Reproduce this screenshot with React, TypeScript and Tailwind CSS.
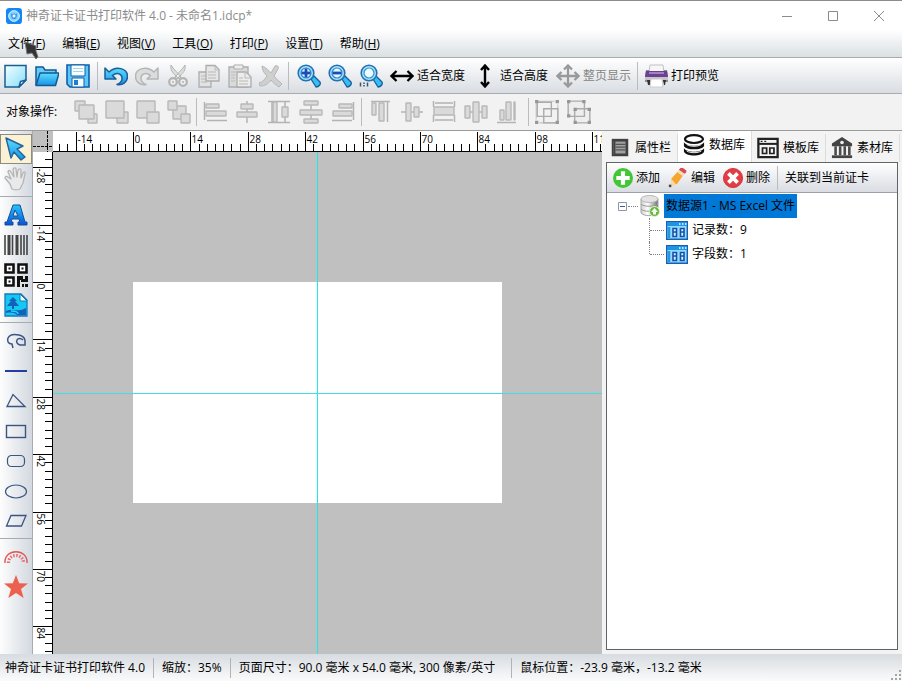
import React, { useEffect, useRef, useState } from 'react';

const FONT = "font-['Open_Sans','Noto_Sans_CJK_SC',sans-serif]";

type IconProps = { children: React.ReactNode; className?: string; box?: string };

function Icon({ children, className = 'size-6', box = '0 0 24 24' }: IconProps) {
  return (
    <svg viewBox={box} className={`shrink-0 ${className}`} fill="none" aria-hidden="true">
      {children}
    </svg>
  );
}

function Gradients() {
  return (
    <svg className="absolute size-0" aria-hidden="true">
      <defs>
        <linearGradient id="sky" x1="0" y1="0" x2="1" y2="1">
          <stop offset="0" stopColor="#f2ffff" />
          <stop offset="1" stopColor="#86dcfb" />
        </linearGradient>
        <linearGradient id="blue" x1="0" y1="0" x2="0" y2="1">
          <stop offset="0" stopColor="#5fdcfc" />
          <stop offset="1" stopColor="#1593e8" />
        </linearGradient>
        <linearGradient id="letter" x1="0" y1="0" x2="0" y2="1">
          <stop offset="0" stopColor="#22c9fb" />
          <stop offset="1" stopColor="#0b50d8" />
        </linearGradient>
        <linearGradient id="steel" x1="0" y1="0" x2="1" y2="0">
          <stop offset="0" stopColor="#d0d0d0" />
          <stop offset="0.4" stopColor="#ffffff" />
          <stop offset="1" stopColor="#6d6d6d" />
        </linearGradient>
      </defs>
    </svg>
  );
}

/* ---------- main toolbar icons ---------- */

const NewIcon = () => (
  <Icon>
    <path d="M1 1.500h21v14.500l-7 7H1z" fill="url(#sky)" stroke="#175f93" strokeWidth="1.500" />
    <path d="M22 16l-7 7 1.500-5.500z" fill="#e9fbff" stroke="#175f93" strokeWidth="1.500" strokeLinejoin="round" />
  </Icon>
);
const OpenIcon = () => (
  <Icon>
    <path d="M1 21V3h7l2 3h11v4" fill="#67cdf8" stroke="#145a92" strokeWidth="1.500" />
    <path d="M1 21.500L5 9h19l-3.500 12.500z" fill="url(#blue)" stroke="#145a92" strokeWidth="1.500" strokeLinejoin="round" />
  </Icon>
);
const SaveIcon = () => (
  <Icon>
    <path d="M1 1h22v22H4l-3-3z" fill="#5cc8fa" stroke="#0f5fa8" strokeWidth="1.600" />
    <path d="M5 1h14v11H5z" fill="#f7feff" stroke="#0f5fa8" />
    <path d="M7 4.500h10M7 7.500h10" stroke="#a8d3e6" />
    <path d="M6 14h12v9H6z" fill="#f2fcff" stroke="#0f5fa8" />
    <path d="M8 16h4v5H8z" fill="#1e7fd0" />
  </Icon>
);
const undoPath = 'M1 4v11h11L8.500 11.500C13 7.500 18.500 10 18 15c-.3 3-2.500 4.500-5 5.500 6 1 10.500-2.500 10.500-8C23.500 4 12 1.500 5 8z';
const UndoIcon = () => (
  <Icon><path d={undoPath} fill="url(#blue)" stroke="#1a5d98" strokeWidth="1.500" strokeLinejoin="round" /></Icon>
);
const RedoIcon = () => (
  <Icon><path d={undoPath} transform="matrix(-1 0 0 1 24 0)" fill="#dcdcdc" stroke="#b5b5b5" strokeWidth="1.500" strokeLinejoin="round" /></Icon>
);
const CutIcon = () => (
  <Icon>
    <path d="M5 1c-1 5 2 8 5 11l3 3 2-2L7 4zM19 1c1 5-2 8-5 11l-3 3-2-2 8-9z" fill="#dedede" stroke="#b3b3b3" />
    <circle cx="7" cy="18" r="3.800" stroke="#b3b3b3" strokeWidth="2.200" fill="#eee" />
    <circle cx="17" cy="18" r="3.800" stroke="#b3b3b3" strokeWidth="2.200" fill="#eee" />
    <path d="M6 18h2M16 18h2" stroke="#b3b3b3" strokeWidth="1.500" />
  </Icon>
);
const CopyIcon = () => (
  <Icon>
    <path d="M2 8h12v15H2z" fill="#e2e2e2" stroke="#adadad" strokeWidth="1.300" />
    <path d="M4 12h6M4 15h6M4 18h6" stroke="#b8b8b8" />
    <path d="M9 1.500h9l4 4V17H9z" fill="#e6e6e6" stroke="#adadad" strokeWidth="1.300" />
    <path d="M18 2v4h4M11 8h8M11 11h8M11 14h8" stroke="#b8b8b8" />
  </Icon>
);
const PasteIcon = () => (
  <Icon>
    <path d="M1 3h19v20H1z" fill="#dadada" stroke="#adadad" strokeWidth="1.300" />
    <path d="M6 1h9v4H6z" fill="#eee" stroke="#adadad" />
    <path d="M3 8h5M3 11h4M3 14h4M3 17h4" stroke="#bbb" />
    <path d="M9 8h9l5 5v10H9z" fill="#ececec" stroke="#adadad" strokeWidth="1.300" />
    <path d="M17 8v6h6M11 14h4M11 17h9M11 20h9" stroke="#b8b8b8" />
  </Icon>
);
const DeleteIcon = () => (
  <Icon>
    <path d="M3 2c5 2 7 5 9 7l4-7c3-1 4 1 3 3l-4 7c2 3 5 5 8 8l-3 3c-3-2-6-4-8-7-3 4-6 6-11 6l-1-3c4-1 6-4 8-7C5 9 3 6 3 2z" fill="#cfcfcf" stroke="#b6b6b6" strokeLinejoin="round" />
  </Icon>
);
function ZoomIcon({ kind }: { kind: 'in' | 'out' | 'fit' }) {
  const x = kind === 'fit' ? 10 : 9;
  return (
    <Icon>
      <path d="M14 15l3-3 6 6c1 2-1 5-4 5z" fill="#36bdf5" stroke="#175e9b" strokeWidth="1.300" strokeLinejoin="round" />
      <circle cx={x} cy="9" r="7.800" fill="#a5e3fa" stroke="#2171b5" strokeWidth="1.600" />
      <circle cx={x} cy="9" r="5" fill={kind === 'fit' ? '#effcff' : '#e3f7ff'} stroke={kind === 'fit' ? '#2f93cd' : '#3486cd'} strokeWidth="1.200" />
      {kind !== 'fit' && <path d="M4.500 9h9" stroke="#174fb3" strokeWidth="2.800" />}
      {kind === 'in' && <path d="M9 4.500v9" stroke="#174fb3" strokeWidth="2.800" />}
      {kind === 'fit' && <path d="M1.500 18.500v4M5 18.500v1.500M5 21v1.500M8.500 18.500v4" stroke="#39566e" strokeWidth="1.500" />}
    </Icon>
  );
}
const WidthIcon = () => (
  <Icon><path d="M2 12h20M6.500 7L1.500 12l5 5M17.500 7l5 5-5 5" stroke="#000" strokeWidth="2.300" /></Icon>
);
const HeightIcon = () => (
  <Icon><path d="M12 2v20M8 6l4-4.500L16 6M8 18l4 4.500 4-4.500" stroke="#000" strokeWidth="2.400" /></Icon>
);
const PageIcon = () => (
  <Icon><path d="M12 2v20M2 12h20M8 5.500l4-4 4 4M8 18.500l4 4 4-4M5.500 8l-4 4 4 4M18.500 8l4 4-4 4" stroke="#999" strokeWidth="2.300" /></Icon>
);
const PrinterIcon = () => (
  <Icon>
    <path d="M6 1h13l1 8H5z" fill="#f6f6f6" stroke="#c2c2c2" />
    <path d="M2 6h3l1 4h13l1-4h3l1 6v6H1v-6z" fill="#8d8d91" />
    <path d="M2 7h21l1 6H1z" fill="#6b3f92" />
    <path d="M5 8h15v2H5z" fill="#a283bf" />
    <path d="M1 13h23v3H1z" fill="#c4c4c8" />
    <path d="M3 16h3v5H4zM19 16h3l-1 5h-1z" fill="#333" />
    <path d="M7 15h11l1 8H6z" fill="#fff" stroke="#ccc" />
  </Icon>
);

/* ---------- object toolbar icons ---------- */

type Rect = [number, number, number, number];

function Blocks({ rects, lines = '' }: { rects: Rect[]; lines?: string }) {
  return (
    <Icon>
      {lines && <path d={lines} stroke="#b3b3b3" strokeWidth="1.500" />}
      {rects.map(([x, y, w, h], i) => (
        <rect key={i} x={x} y={y} width={w} height={h} rx="0.500" fill="#dadada" stroke="#b8b8b8" strokeWidth="1.400" />
      ))}
    </Icon>
  );
}

type Tool = { name: string; rects: Rect[]; lines?: string };

const orderTools: Tool[] = [
  { name: '置于顶层', rects: [[1, 1, 10, 10], [14, 14, 9, 9], [5, 5, 15, 14]] },
  { name: '上移一层', rects: [[12, 12, 11, 11], [1, 1, 18, 17]] },
  { name: '下移一层', rects: [[1, 1, 18, 17], [11, 12, 12, 11]] },
  { name: '置于底层', rects: [[6, 6, 13, 13], [1, 1, 9, 9], [14, 14, 9, 9]] },
];
const alignTools: Tool[] = [
  { name: '左对齐', lines: 'M1.500 2v18M4 20.500h20', rects: [[3, 4, 13, 4], [3, 11, 20, 5]] },
  { name: '水平居中', lines: 'M12 1v22', rects: [[6, 4, 12, 5], [2, 12, 20, 5]] },
  { name: '垂直等距', lines: 'M1 1.500h22M1 22.500h22M5 2v20M18 2v20', rects: [[6, 2, 4, 20], [15, 7, 6, 10]] },
  { name: '垂直分布', lines: 'M12 1v22', rects: [[5, 1, 14, 4], [1, 10, 22, 5], [5, 19, 14, 4]] },
  { name: '右对齐', lines: 'M22.500 2v18M1 20.500h20', rects: [[8, 4, 13, 4], [2, 11, 19, 5]] },
];
const distributeTools: Tool[] = [
  { name: '顶对齐', lines: 'M3 1.500h19M19.500 2v20', rects: [[4, 3, 4, 12], [11, 3, 5, 18]] },
  { name: '垂直居中', lines: 'M1 12h22', rects: [[6, 3, 5, 18], [14, 7, 5, 10]] },
  { name: '水平等距', lines: 'M1.500 1v6M22.500 1v6M1.500 15v7M22.500 15v7M3 3h18M3 20h18', rects: [[2, 7, 20, 8]] },
  { name: '水平分布', lines: 'M1 12h22', rects: [[1, 6, 5, 12], [9, 2, 6, 20], [18, 6, 5, 12]] },
  { name: '底对齐', lines: 'M1 22.500h19', rects: [[4, 10, 4, 10], [10, 2, 5, 18], [18, 2, 1, 18]] },
];

const GroupIcon = () => (
  <Icon className="size-[26px]">
    <path d="M4 2h15M2 4v15M22 5v15M5 22h15" stroke="#c4c4c4" />
    <path d="M3 3h13v13H3zM9 9h13v13H9z" stroke="#ababab" strokeWidth="1.300" />
    <path d="M1 1h3v3H1zM20 1h3v3h-3zM1 20h3v3H1zM20 20h3v3h-3z" fill="#969696" />
  </Icon>
);
const UngroupIcon = () => (
  <Icon className="size-[26px]">
    <path d="M2 2h15v14H2zM8 9h14v13H8z" stroke="#ababab" strokeWidth="1.300" fill="#eee" />
    <path d="M1 1h3v3H1zM15 1h3v3h-3zM1 14h3v3H1zM7 8h3v3H7zM20 8h3v3h-3zM7 20h3v3H7zM20 20h3v3h-3z" fill="#969696" />
  </Icon>
);

/* ---------- side tool icons ---------- */

const PointerIcon = () => (
  <Icon><path d="M2 1l17 8-6 3 8 8-4 3-7-8-3 6z" fill="url(#blue)" stroke="#25639a" strokeWidth="1.400" strokeLinejoin="round" /></Icon>
);
const HandIcon = () => (
  <Icon>
    <path d="M8 22l-2-5-5-6c0-2 2-2 3-1l3 2-3-7c0-2 2-2 3 0l3 5-1-8c1-2 3-1 3 0l1 8 1-7c1-2 3-1 3 0v8l2-5c1-2 3-1 2 1l-2 9-3 6c-2 1-6 1-8 0z" fill="#e9e9e9" stroke="#b5b5b5" strokeWidth="1.300" strokeLinejoin="round" />
  </Icon>
);
const LetterIcon = () => (
  <Icon>
    <path d="M9 2h7l5 17h2v3h-9v-3h2l-1-3H8l-1 3h2v3H1v-3h2zM11 7l-2 6h5z" fill="url(#letter)" fillRule="evenodd" stroke="#174e95" />
  </Icon>
);
const BarcodeIcon = () => (
  <Icon>
    <path d="M1 2v20M8.500 2v20M17 2v20M20 2v20M23 2v20" stroke="#444" strokeWidth="1.600" />
    <path d="M5 2v20M13 2v20" stroke="#444" strokeWidth="3" />
  </Icon>
);
const QrIcon = () => (
  <Icon>
    <path d="M1.500 1.500h8v8h-8zM14.500 1.500h8v8h-8zM1.500 14.500h8v8h-8z" fill="#fff" stroke="#111" strokeWidth="2.600" />
    <path d="M4.500 4.500h2v2h-2zM17.500 4.500h2v2h-2zM4.500 17.500h2v2h-2zM13 13h6v3h2v-3h3v6h-7v-2h-1v7h-3zM18 21h2v3h-2zM21 21h3v3h-3z" fill="#111" />
  </Icon>
);
const PictureIcon = () => (
  <Icon>
    <path d="M1 1h16l6 6v16H1z" fill="#13c9f2" stroke="#1478b9" strokeWidth="1.300" />
    <path d="M16 1v7h7z" fill="#e6fbff" stroke="#1478b9" />
    <path d="M9 4l4 4h-2l4 5h-5v3H8v-3H3l4-5H5zM2 18c6-3 10 2 20-3v7h-9c-1-2-6-3-11-2z" fill="#1560b9" />
    <path d="M7 18c4 0 7 1 7 3" stroke="#20d1ff" strokeWidth="1.500" />
  </Icon>
);
const draw = '#3d5482';
const LassoIcon = () => (
  <Icon><path d="M9 19l-1-4c-4 0-5-3-4-6 2-4 7-4 11-3 4 1 6 3 6 6v4h-5c-3-1-4-3-3-5 1-2 4-2 6 0" stroke={draw} strokeWidth="1.500" /></Icon>
);
const LineIcon = () => <Icon><path d="M1 12h22" stroke="#253fa0" strokeWidth="2" /></Icon>;
const TriangleIcon = () => <Icon><path d="M9 5.500L3 17.500h18z" stroke={draw} strokeWidth="1.300" /></Icon>;
const RectangleIcon = () => <Icon><rect x="2.500" y="6.500" width="19" height="12" stroke={draw} strokeWidth="1.400" /></Icon>;
const RoundedIcon = () => <Icon><rect x="3.500" y="6.500" width="17" height="11" rx="4" stroke={draw} strokeWidth="1.200" /></Icon>;
const EllipseIcon = () => <Icon><ellipse cx="12" cy="12.500" rx="10.500" ry="6.500" stroke={draw} strokeWidth="1.200" /></Icon>;
const SkewIcon = () => <Icon><path d="M7 6.500h15l-4.500 10.500H2.500z" stroke={draw} strokeWidth="1.300" /></Icon>;
const ArcTextIcon = () => (
  <Icon>
    <path d="M1 18c-1-15 23-15 22 0" stroke="#e25757" strokeWidth="1.400" />
    <path d="M4.500 18c0-10 15-10 15 0" stroke="#e66c6c" strokeWidth="3.200" strokeDasharray="1.500 1.500" />
  </Icon>
);
const StarIcon = () => (
  <Icon><path d="M12 0l3.200 8.300 8.800.2-7 5.400 2.700 9.100L12 18l-7.700 5L7 13.900 0 8.500l8.800-.2z" fill="#ed6050" /></Icon>
);

/* ---------- panel icons ---------- */

const PropsIcon = () => (
  <Icon className="size-[22px]">
    <path d="M3 2h18v19H3z" fill="#414141" />
    <path d="M7 5h11v13H7z" fill="#a1a1a1" />
    <path d="M7 8h11M7 11h11M7 14h11M5 4v15" stroke="#565656" strokeWidth="1.300" />
  </Icon>
);
const DatabaseIcon = () => (
  <Icon className="size-[22px]">
    <path d="M1 9c3 5 19 5 22 0v4c-2 5-20 5-22 0z" fill="#111" />
    <path d="M1 15.500c3 5 19 5 22 0V19c-2 6-20 6-22 0z" fill="#111" />
    <ellipse cx="12" cy="5.500" rx="9.800" ry="4.300" fill="#fff" stroke="#111" strokeWidth="2.400" />
    <path d="M4 11.500c4 2.500 12 2.500 16 0M4 18.500c4 2.500 12 2.500 16 0" stroke="#fff" strokeWidth="1" />
  </Icon>
);
const TemplateIcon = () => (
  <Icon className="size-[22px]">
    <path d="M1.500 2h21v20h-21z" stroke="#222" strokeWidth="2.500" />
    <path d="M2 7.500h20" stroke="#222" strokeWidth="2.200" />
    <path d="M4 4h2v1.500H4zM8 4h2v1.500H8z" fill="#222" />
    <path d="M6 12h4.500v6H6zM14 12h4.500v6H14z" stroke="#222" strokeWidth="1.900" />
  </Icon>
);
const MuseumIcon = () => (
  <Icon className="size-[22px]">
    <path d="M12 0L1 7v3h22V7z" fill="#444" />
    <path d="M5 10v10M10 10v10M15 10v10M20 10v10" stroke="#4c4c4c" strokeWidth="2.800" />
    <path d="M1 20h22v3H1z" fill="#444" />
    <circle cx="12" cy="6" r="2" fill="#eee" />
  </Icon>
);
const AddIcon = () => (
  <Icon className="size-5">
    <circle cx="12" cy="12" r="12" fill="#43c636" />
    <path d="M12 4v16M4 12h16" stroke="#fff" strokeWidth="5" />
  </Icon>
);
const EditIcon = () => (
  <Icon className="size-5">
    <path d="M4 13L12 4l6 5-7 10-5 2z" fill="#f5a62b" />
    <path d="M11 5l2-3 7 5-2 3z" fill="#f3dcc0" />
    <path d="M13 2l2-2h3l4 3v2l-2 2z" fill="#dc4b4b" />
    <path d="M4 13l6 7-7 2z" fill="#f9d7a2" />
    <path d="M1 20h3v3H1z" fill="#3d4a5c" />
  </Icon>
);
const RemoveIcon = () => (
  <Icon className="size-5">
    <circle cx="12" cy="12" r="11.500" fill="#e43c42" stroke="#c62a31" />
    <path d="M6.500 6.500l11 11M17.500 6.500l-11 11" stroke="#fff" strokeWidth="4.500" />
  </Icon>
);
const SourceIcon = () => (
  <Icon className="h-[22px] w-5" box="0 0 20 22">
    <path d="M1 4v14c2 3 13 4 17 0V4" fill="url(#steel)" stroke="#a5a5a5" />
    <ellipse cx="9.500" cy="4" rx="8.500" ry="3.500" fill="#e3e3e3" stroke="#b5b5b5" />
    <path d="M1 9c2 3 14 3 17 0M1 14c2 3 14 3 17 0" stroke="#999" />
    <circle cx="14.500" cy="16.500" r="5" fill="#64b83c" stroke="#dff2d6" />
    <path d="M14.500 13l3.500 4h-2v2.500h-3V17h-2z" fill="#f5fff0" />
  </Icon>
);
const FieldIcon = () => (
  <Icon className="h-[19px] w-[22px]" box="0 0 22 19">
    <path d="M.7.700h20.600v17.600H.7z" fill="#8fdcff" stroke="#1560b4" strokeWidth="1.400" />
    <path d="M1 1h20v4H1z" fill="#1f93e4" />
    <path d="M13 3h1.500M16 3h1.500M19 3h1.500" stroke="#fff" strokeWidth="1.500" />
    <path d="M7 7.500h3.500v3.500H7zM7 11h3.500v4.500H7zM14.500 7.500H18v3.500h-3.500zM14.500 11H18v4.500h-3.500z" fill="#d8f5ff" stroke="#1a50a8" strokeWidth="1.600" />
    <path d="M3 6v11" stroke="#2895df" strokeWidth="2.500" />
  </Icon>
);

/* ---------- shared controls ---------- */

function ToolButton({ label, wide, disabled, children }: { label: string; wide?: boolean; disabled?: boolean; children: React.ReactNode }) {
  return (
    <button type="button" aria-label={label} disabled={disabled} className={`flex h-8 items-center justify-center ${wide ? 'w-8' : 'w-[31px]'}`}>
      {children}
    </button>
  );
}

function TextButton({ label, disabled, children }: { label: string; disabled?: boolean; children: React.ReactNode }) {
  return (
    <button type="button" disabled={disabled} className="flex h-8 items-center gap-[3px] px-1 whitespace-nowrap disabled:text-[#858585]">
      {children}
      {label}
    </button>
  );
}

const Separator = () => <span className="mx-0.5 h-7 w-px shrink-0 bg-[#b9bcc0]" />;

const menus = [['文件', 'F'], ['编辑', 'E'], ['视图', 'V'], ['工具', 'O'], ['打印', 'P'], ['设置', 'T'], ['帮助', 'H']];

/* ---------- rulers ---------- */

const TICK = 57.375 / 7;

function useTicks(origin: number, side: 'width' | 'height') {
  const ref = useRef<SVGSVGElement>(null);
  const [length, setLength] = useState(500);
  useEffect(() => {
    const el = ref.current;
    if (!el) return;
    const observer = new ResizeObserver(() => setLength(el.getBoundingClientRect()[side]));
    observer.observe(el);
    return () => observer.disconnect();
  }, [side]);
  const first = -Math.floor((origin - 4) / TICK);
  const last = Math.floor((length - origin) / TICK);
  const ticks = Array.from({ length: Math.max(0, last - first + 1) }, (_, k) => ({
    value: (first + k) * 2,
    major: (first + k) % 7 === 0,
    at: Math.round(origin + (first + k) * TICK) + 0.5,
  }));
  return { ref, ticks };
}

function TopRuler() {
  const { ref, ticks } = useTicks(80, 'width');
  return (
    <svg ref={ref} className="h-[21px] min-w-0 flex-1 bg-white" shapeRendering="crispEdges" aria-label="水平标尺">
      {ticks.map((t) => (
        <g key={t.value}>
          <path d={`M${t.at} ${t.major ? 1 : 13}V21`} stroke="#000" />
          {t.major && <text x={t.at + 1} y="12" className="text-[10px]">{t.value}</text>}
        </g>
      ))}
      <rect y="20" width="100%" height="1" fill="#000" />
    </svg>
  );
}

function LeftRuler() {
  const { ref, ticks } = useTicks(130, 'height');
  return (
    <svg ref={ref} className="w-5 shrink-0 bg-white" shapeRendering="crispEdges" aria-label="垂直标尺">
      {ticks.map((t) => (
        <g key={t.value}>
          <path d={`M${t.major ? 0 : 12} ${t.at}H20`} stroke="#000" />
          {t.major && <text transform={`translate(4 ${t.at + 1}) rotate(90)`} className="text-[10px]">{t.value}</text>}
        </g>
      ))}
      <rect x="19" width="1" height="100%" fill="#000" />
    </svg>
  );
}

const sideGroups: { name: string; icon: React.ReactNode }[][] = [
  [{ name: '选择', icon: <PointerIcon /> }, { name: '平移', icon: <HandIcon /> }],
  [{ name: '文字', icon: <LetterIcon /> }, { name: '条形码', icon: <BarcodeIcon /> }, { name: '二维码', icon: <QrIcon /> }, { name: '图片', icon: <PictureIcon /> }],
  [
    { name: '曲线', icon: <LassoIcon /> },
    { name: '直线', icon: <LineIcon /> },
    { name: '三角形', icon: <TriangleIcon /> },
    { name: '矩形', icon: <RectangleIcon /> },
    { name: '圆角矩形', icon: <RoundedIcon /> },
    { name: '椭圆', icon: <EllipseIcon /> },
    { name: '平行四边形', icon: <SkewIcon /> },
  ],
  [{ name: '弧形文字', icon: <ArcTextIcon /> }, { name: '星形', icon: <StarIcon /> }],
];

const tabs = [
  { label: '属性栏', icon: <PropsIcon /> },
  { label: '数据库', icon: <DatabaseIcon /> },
  { label: '模板库', icon: <TemplateIcon /> },
  { label: '素材库', icon: <MuseumIcon /> },
];

function SidePanel() {
  return (
    <aside className="flex w-[300px] shrink-0 flex-col bg-[#f3f3f3] pb-1">
      <div role="tablist" className="flex h-[31px] items-end pl-0.5">
        {tabs.map((tab, i) => (
          <button
            key={tab.label}
            type="button"
            role="tab"
            aria-selected={i === 1}
            className="flex h-7 w-[74px] shrink-0 items-center gap-1 border-r border-[#dcdcdc] pl-[5px] whitespace-nowrap aria-selected:h-[31px] aria-selected:bg-white aria-selected:pb-1"
          >
            {tab.icon}
            {tab.label}
          </button>
        ))}
      </div>
      <div className="mx-1 flex flex-1 flex-col border border-[#5f6468] bg-white">
        <div className="flex h-[30px] items-center border-b border-[#9da2a8] bg-linear-to-b from-white to-[#d9dce2] pl-0.5">
          {[
            { label: '添加', icon: <AddIcon /> },
            { label: '编辑', icon: <EditIcon /> },
            { label: '删除', icon: <RemoveIcon /> },
          ].map((b) => (
            <button key={b.label} type="button" className="flex items-center gap-[3px] px-1 whitespace-nowrap">
              {b.icon}
              {b.label}
            </button>
          ))}
          <span className="mr-1 ml-[3px] h-6 w-px bg-[#b9bcc0]" />
          <button type="button" className="px-[3px] whitespace-nowrap">关联到当前证卡</button>
        </div>
        <ul role="tree" className="pt-px pl-[11px]">
          <li role="treeitem" aria-expanded="true" aria-selected="true">
            <div className="flex h-6 items-center">
              <Icon className="size-[9px]" box="0 0 9 9">
                <path d="M.5.500h8v8h-8z" fill="#fff" stroke="#8a97a8" />
                <path d="M2 4.500h5" stroke="#3f5a8c" />
              </Icon>
              <span className="mr-0.5 ml-px w-2.5 border-t border-dotted border-[#808080]" />
              <SourceIcon />
              <span className="ml-1 flex h-6 items-center bg-[#0078d7] px-0.5 whitespace-nowrap">数据源1 - MS Excel 文件</span>
            </div>
            <ul role="group" className="ml-[31px]">
              {['记录数：9', '字段数：1'].map((label, i) => (
                <li key={label} role="treeitem" className="flex h-6 items-center">
                  <span className={`w-px border-l border-dotted border-[#808080] ${i === 0 ? 'h-6' : 'h-3 self-start'}`} />
                  <span className="mr-0.5 w-3.5 border-t border-dotted border-[#808080]" />
                  <FieldIcon />
                  <span className="ml-1 whitespace-nowrap">{label}</span>
                </li>
              ))}
            </ul>
          </li>
        </ul>
      </div>
    </aside>
  );
}

export default function App() {
  return (
    <div className={`relative flex h-screen flex-col overflow-hidden border-t border-[#8c8c8c] bg-[#f2f2f2] text-xs text-black ${FONT}`}>
      <Gradients />

      <header className="flex h-[29px] shrink-0 items-center bg-white pl-1.5">
        <Icon className="size-4">
          <rect width="24" height="24" rx="5" fill="#1487f4" />
          <circle cx="12" cy="12" r="8" fill="#83cffb" stroke="#e2f5ff" strokeWidth="1.500" />
          <path d="M7 8l5 3 5-3-2 8H9z" fill="#2a9df5" />
          <circle cx="12" cy="12" r="3" fill="#e9f8ff" stroke="#1778dc" />
        </Icon>
        <h1 className="ml-1 flex-1 whitespace-nowrap text-[#8b8b8b]">神奇证卡证书打印软件 4.0 - 未命名1.idcp*</h1>
        <div className="flex">
          {[
            { name: '最小化', d: 'M0 5.500h10' },
            { name: '最大化', d: 'M.5.500h9v9h-9z' },
            { name: '关闭', d: 'M0 0l10 10M10 0L0 10' },
          ].map((b) => (
            <button key={b.name} type="button" aria-label={b.name} className="flex h-7 w-[46px] items-center justify-center">
              <Icon className="size-2.5 overflow-visible" box="0 0 10 10"><path d={b.d} stroke="#8b8b8b" /></Icon>
            </button>
          ))}
        </div>
      </header>

      <nav className="flex h-7 shrink-0 items-center gap-px border-b border-[#a9adb0] bg-linear-to-b from-white to-[#dae0e3] pt-px">
        {menus.map(([name, key]) => (
          <button key={key} type="button" className="px-2 whitespace-nowrap">
            {name}(<span className="underline">{key}</span>)
          </button>
        ))}
      </nav>

      <div role="toolbar" aria-label="常用工具" className="flex h-9 shrink-0 items-center border-b border-[#a9adb0] bg-linear-to-b from-white to-[#d9dde2]">
        <ToolButton label="新建"><NewIcon /></ToolButton>
        <ToolButton label="打开"><OpenIcon /></ToolButton>
        <ToolButton label="保存"><SaveIcon /></ToolButton>
        <span className="w-0.5" />
        <Separator />
        <ToolButton label="撤销"><UndoIcon /></ToolButton>
        <ToolButton label="重做" disabled><RedoIcon /></ToolButton>
        <ToolButton label="剪切" disabled><CutIcon /></ToolButton>
        <ToolButton label="复制" disabled><CopyIcon /></ToolButton>
        <ToolButton label="粘贴" disabled><PasteIcon /></ToolButton>
        <ToolButton label="删除" disabled><DeleteIcon /></ToolButton>
        <Separator />
        <span className="w-0.5" />
        <ToolButton label="放大"><ZoomIcon kind="in" /></ToolButton>
        <ToolButton label="缩小"><ZoomIcon kind="out" /></ToolButton>
        <ToolButton label="实际大小"><ZoomIcon kind="fit" /></ToolButton>
        <TextButton label="适合宽度"><WidthIcon /></TextButton>
        <TextButton label="适合高度"><HeightIcon /></TextButton>
        <TextButton label="整页显示" disabled><PageIcon /></TextButton>
        <Separator />
        <TextButton label="打印预览"><PrinterIcon /></TextButton>
      </div>

      <div role="toolbar" aria-label="对象操作" className="flex h-[37px] shrink-0 items-center border-b border-[#9b9b9b]">
        <span className="w-[70px] pl-1.5 whitespace-nowrap">对象操作:</span>
        {orderTools.map((t) => (
          <ToolButton key={t.name} label={t.name} disabled><Blocks rects={t.rects} lines={t.lines} /></ToolButton>
        ))}
        <Separator />
        {alignTools.map((t) => (
          <ToolButton key={t.name} label={t.name} wide disabled><Blocks rects={t.rects} lines={t.lines} /></ToolButton>
        ))}
        <Separator />
        {distributeTools.map((t) => (
          <ToolButton key={t.name} label={t.name} wide disabled><Blocks rects={t.rects} lines={t.lines} /></ToolButton>
        ))}
        <span className="w-0.5" />
        <Separator />
        <ToolButton label="组合" wide disabled><GroupIcon /></ToolButton>
        <ToolButton label="取消组合" wide disabled><UngroupIcon /></ToolButton>
      </div>

      <main className="flex min-h-0 flex-1">
        <div role="toolbar" aria-label="绘图工具" className="flex w-[33px] shrink-0 flex-col border-r border-[#a7abb0] bg-linear-to-r from-[#fdfdfd] to-[#d3d9e0]">
          {sideGroups.map((group, g) => (
            <div key={g} className="flex flex-col border-b border-[#a7abb0] pt-[3px] pb-0.5 last:flex-1 last:border-b-0">
              {group.map((t) => (
                <button
                  key={t.name}
                  type="button"
                  aria-label={t.name}
                  aria-pressed={t.name === '选择'}
                  className="flex h-[30px] items-center justify-center border border-transparent aria-pressed:border-[#8e8c82] aria-pressed:bg-[#fbf2d3]"
                >
                  {t.icon}
                </button>
              ))}
            </div>
          ))}
        </div>

        <section className="flex min-w-0 flex-1 flex-col" aria-label="画布">
          <div className="flex">
            <svg className="h-[21px] w-5 shrink-0 bg-[#c0c0c0]" aria-hidden="true">
              <path d="M14.500 0v21M0 15.500h20" stroke="#000" strokeDasharray="3 1" />
            </svg>
            <TopRuler />
          </div>
          <div className="flex min-h-0 flex-1">
            <LeftRuler />
            <div className="relative flex-1 overflow-hidden bg-[#c0c0c0]">
              <div className="absolute top-[130px] left-20 h-[221px] w-[369px] bg-white" />
              <div className="absolute inset-y-0 left-[264px] w-px bg-[#1fe8e8]" />
              <div className="absolute inset-x-0 top-[241px] h-px bg-[#43dfe0]" />
            </div>
          </div>
        </section>

        <SidePanel />
      </main>

      <footer className="relative flex h-[27px] shrink-0 items-center bg-linear-to-b from-[#d7dce1] to-[#fbfbfb] whitespace-nowrap">
        <span className="pr-2 pl-[5px]">神奇证卡证书打印软件 4.0</span>
        <span className="h-5 w-px bg-[#b0b4b8]" />
        <span className="px-2">缩放：35%</span>
        <span className="h-5 w-px bg-[#b0b4b8]" />
        <span className="pr-4 pl-2">页面尺寸：90.0 毫米 x 54.0 毫米, 300 像素/英寸</span>
        <span className="h-5 w-px bg-[#b0b4b8]" />
        <span className="px-2">鼠标位置：-23.9 毫米，-13.2 毫米</span>
        <svg viewBox="0 0 11 11" className="absolute right-0 bottom-0 size-[11px]" fill="#a0a5aa" aria-hidden="true">
          <path d="M8 0h2v2H8zM4 4h2v2H4zM8 4h2v2H8zM0 8h2v2H0zM4 8h2v2H4zM8 8h2v2H8z" />
        </svg>
      </footer>

      <svg viewBox="0 0 16 20" className="absolute top-10 left-6 h-5 w-4" aria-hidden="true">
        <path d="M1 1l11 4 0 5 2 6-2 2-4-6-5 1z" fill="#333" stroke="#777" />
      </svg>
    </div>
  );
}
